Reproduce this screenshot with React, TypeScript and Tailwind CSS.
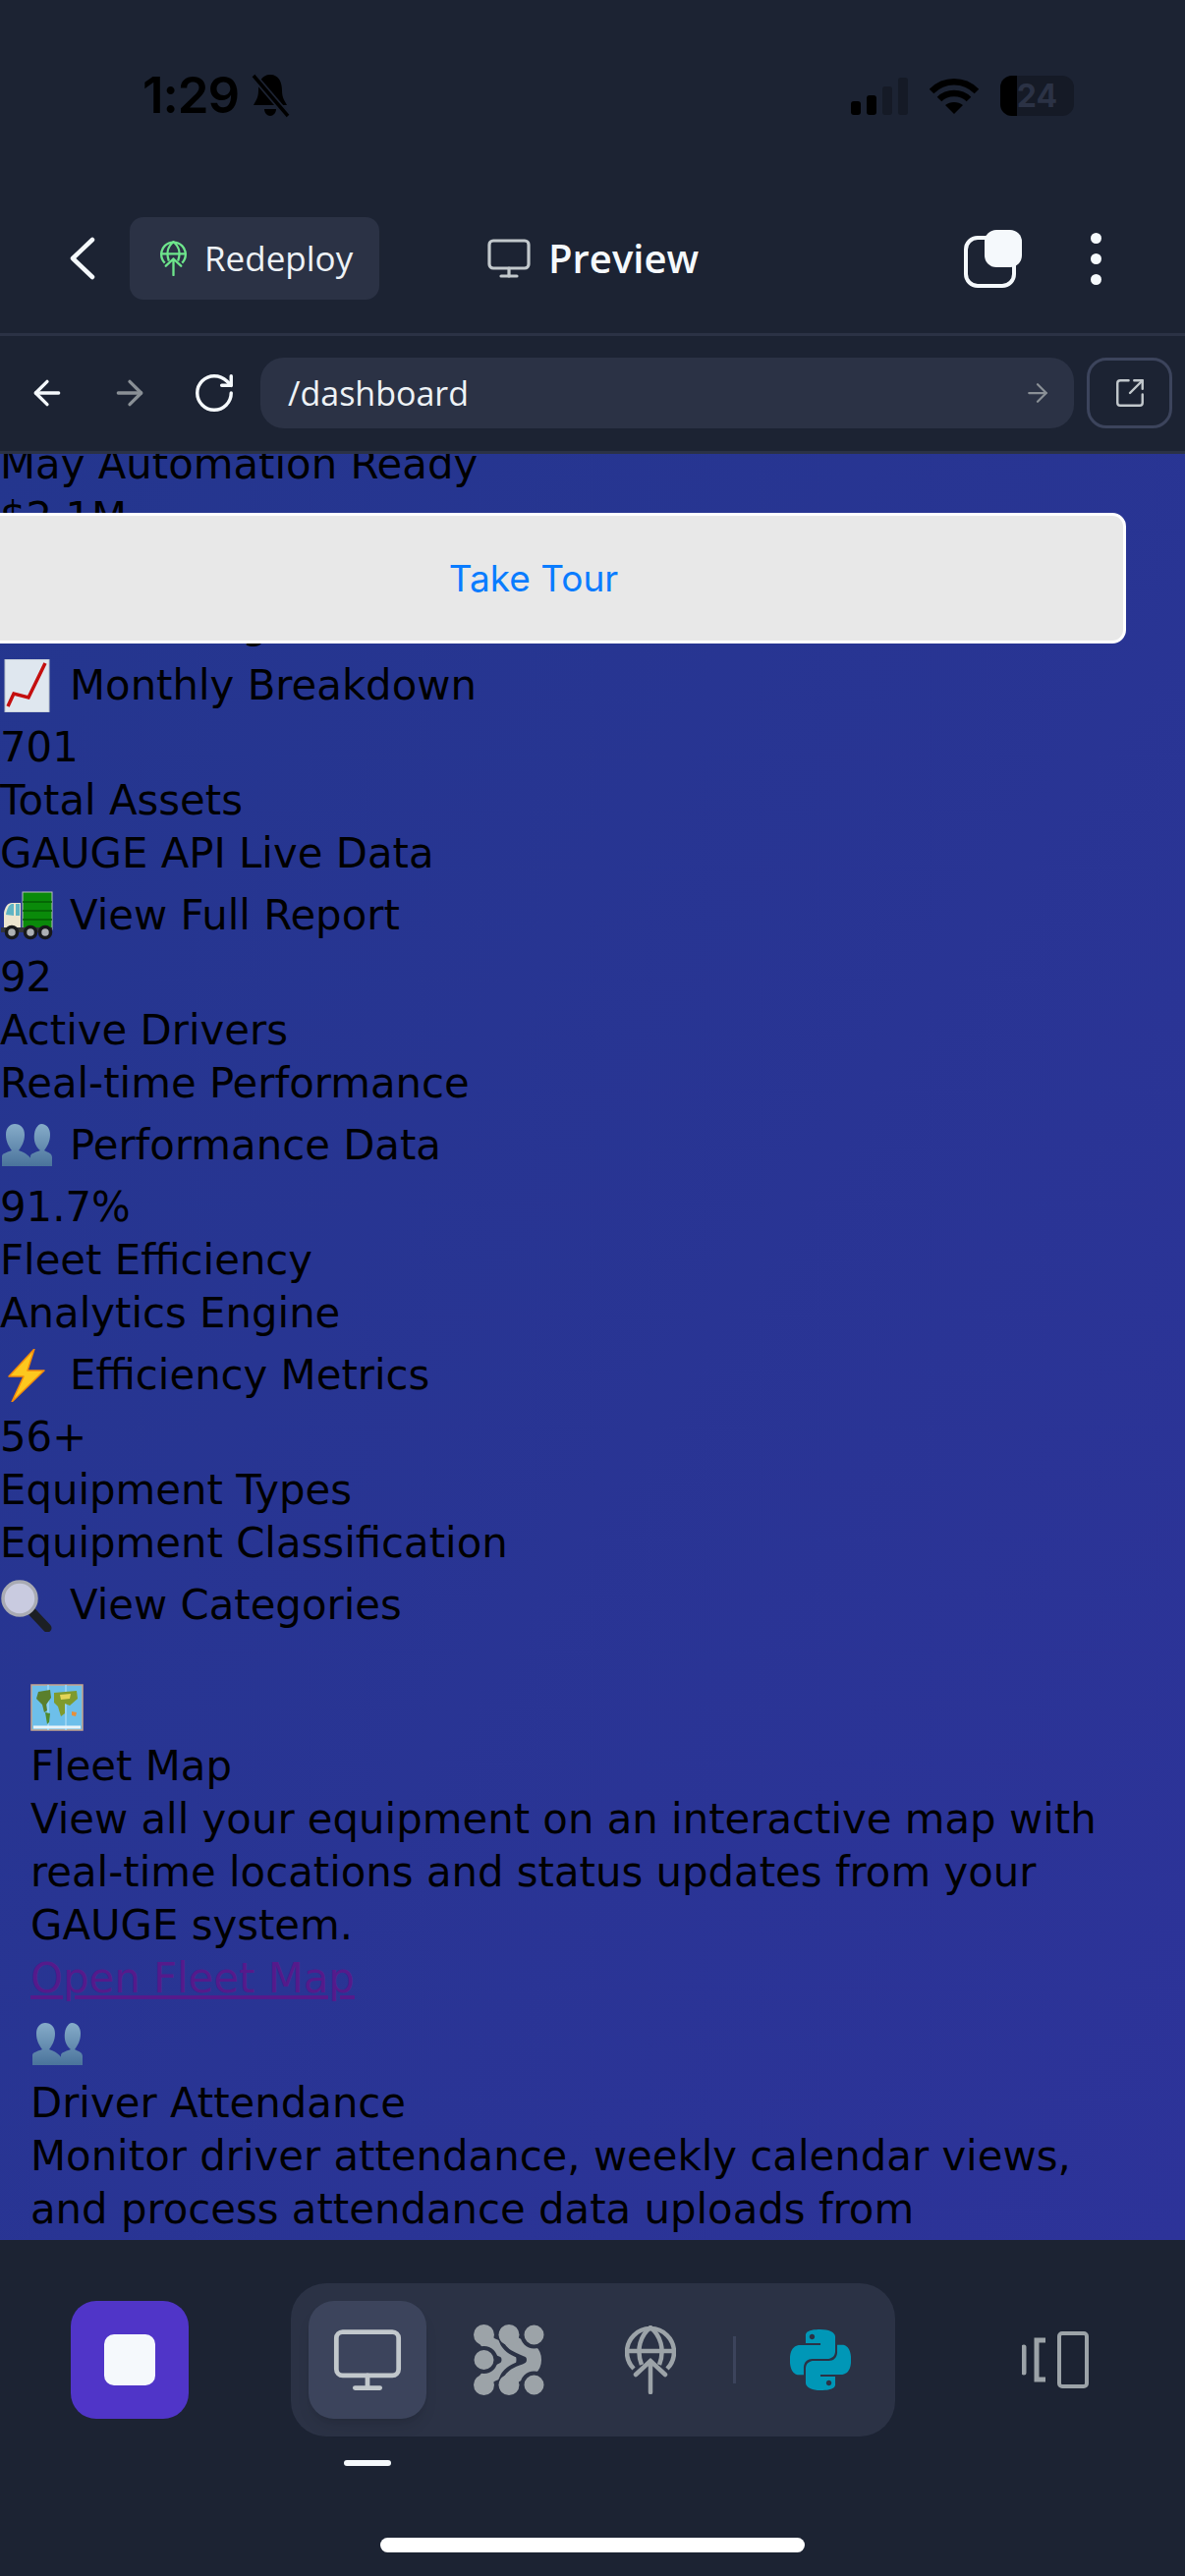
import { ArrowLeft, ArrowRight, Monitor, RotateCw, SquareArrowOutUpRight } from "lucide-react";
import type { ReactNode } from "react";
import { SiPython } from "react-icons/si";

const pageFont = "font-['DejaVu_Sans',sans-serif]";

function GlobeUp({ className, color }: { className: string; color: string }) {
  return (
    <svg className={className} viewBox="0 0 52 70" fill="none" stroke={color} strokeWidth="4.5" strokeLinecap="round">
      <path d="M9 44 A24 24 0 1 1 43 44" strokeLinecap="butt" />
      <path d="M2 26 H50" />
      <path d="M17 40 C11 24 16 10 26 2 C36 10 41 24 35 40" strokeLinecap="butt" />
      <path d="M26 36 V68 M11 50 L26 36 L41 50" />
    </svg>
  );
}

function DotsIcon() {
  const bg = "#2b3245";
  const fg = "#9ca3a8";
  return (
    <svg className="h-[72px] w-[72px]" viewBox="0 0 72 72">
      <g fill="none" strokeLinecap="round">
        <path d="M10.5 10.5 C13 27 36 20 36 36 C36 52 13 45 10.5 61.5" stroke={fg} strokeWidth="15" />
        <path d="M36 10.5 C38.5 27 61.5 20 61.5 36 C61.5 52 38.5 45 36 61.5" stroke={bg} strokeWidth="23" />
        <path d="M36 10.5 C38.5 27 61.5 20 61.5 36 C61.5 52 38.5 45 36 61.5" stroke={fg} strokeWidth="15" />
      </g>
      <g fill={fg}>
        <circle cx="10.5" cy="10.5" r="10.5" />
        <circle cx="36" cy="10.5" r="10.5" />
        <circle cx="10.5" cy="61.5" r="10.5" />
        <circle cx="36" cy="61.5" r="10.5" />
      </g>
      <g fill={fg} stroke={bg} strokeWidth="4">
        <circle cx="61.5" cy="10.5" r="12" />
        <circle cx="10.5" cy="36" r="12" />
        <circle cx="61.5" cy="61.5" r="12" />
      </g>
    </svg>
  );
}

function ChartEmoji() {
  return (
    <svg className="h-[54px] w-[54px]" viewBox="0 0 54 54">
      <rect x="5" y="0" width="45" height="54" fill="#dfe7ef" stroke="#b9c2cc" />
      <path d="M8 48 L14 35 L29 39 L46 4" fill="none" stroke="#c40f0f" strokeWidth="3.5" />
    </svg>
  );
}

function TruckEmoji() {
  return (
    <svg className="h-[54px] w-[54px]" viewBox="0 0 54 50">
      <rect x="23" y="1" width="30" height="38" fill="#0a8a0a" stroke="#b8bcc0" strokeWidth="1" />
      <path d="M23 11 H53 M23 20 H53 M23 29 H53" stroke="#045c04" strokeWidth="1.5" />
      <path d="M4 38 L4 22 C5 16 8 12 12 12 L21 12 L21 38 Z" fill="#ece5cf" />
      <path d="M6 24 C7 18 9 14 12 13 L14 13 L14 25 Z" fill="#5fb4c4" />
      <rect x="16" y="13" width="4" height="12" fill="#5fb4c4" />
      <rect x="1" y="37" width="52" height="5" fill="#33353a" />
      <g fill="#aeb1b5" stroke="#17181b" strokeWidth="3.5">
        <circle cx="12" cy="42" r="5.5" />
        <circle cx="31" cy="42" r="5.5" />
        <circle cx="46" cy="42" r="5.5" />
      </g>
    </svg>
  );
}

function PeopleEmoji() {
  return (
    <svg className="h-[54px] w-[54px]" viewBox="0 0 54 46">
      <defs>
        <linearGradient id="bust" x1="0" y1="0" x2="0" y2="1">
          <stop offset="0" stopColor="#86acc9" />
          <stop offset="1" stopColor="#4a739b" />
        </linearGradient>
      </defs>
      <path d="M31 44 V34 C31 31 36 30 41 28 C36 24 34 18 35 11 C36 4 40 1 42 1 C48 1 51 6 51 12 C51 19 48 24 45 28 C49 30 53 31 53 35 V44 Z" fill="url(#bust)" />
      <path d="M2 44 V34 C2 31 7 30 12 28 C9 24 6 19 6 12 C6 5 10 1 15 1 C21 1 25 5 25 12 C25 19 22 24 19 28 C24 30 30 31 36 44 Z" fill="url(#bust)" />
    </svg>
  );
}

function BoltEmoji() {
  return (
    <svg className="h-[54px] w-[54px]" viewBox="0 0 54 54">
      <path d="M35 0 L9 28 L24 28 L12 54 L45 22 L28 22 Z" fill="#fdc81e" stroke="#f28a0c" strokeWidth="1.5" strokeLinejoin="round" />
    </svg>
  );
}

function SearchEmoji() {
  return (
    <svg className="h-[54px] w-[54px]" viewBox="0 0 54 54">
      <path d="M32 33 L48 50" stroke="#1c1f24" strokeWidth="9" strokeLinecap="round" />
      <circle cx="20" cy="20" r="17" fill="#c9cbe0" stroke="#a9abb3" strokeWidth="3.5" />
    </svg>
  );
}

function MapEmoji() {
  return (
    <svg className="h-[54px] w-[54px]" viewBox="0 0 54 54">
      <rect x="1" y="4" width="52" height="46" fill="#6dbfea" stroke="#c8a68c" strokeWidth="1.5" />
      <path d="M18 4 V50 M36 4 V50" stroke="#94d2f2" strokeWidth="2" />
      <path d="M8 11 L20 9 L21 17 L16 24 L17 30 L14 32 L12 24 L6 18 Z" fill="#5a7f2c" />
      <path d="M15 32 L20 33 L19 42 L17 44 Z" fill="#4f8a2d" />
      <path d="M24 12 L47 10 L48 18 L40 25 L35 23 L35 33 L31 36 L28 26 L24 22 Z" fill="#7f9a2d" />
      <path d="M30 14 L41 13 L40 18 L31 19 Z" fill="#e3d457" />
      <path d="M42 31 L47 32 L46 36 L42 35 Z" fill="#e88f3a" />
      <path d="M3 47 H51" stroke="#e9f3f8" strokeWidth="3" />
    </svg>
  );
}

function Line({ children, className = "" }: { children: ReactNode; className?: string }) {
  return <div className={`h-[54px] leading-[54px] whitespace-nowrap ${className}`}>{children}</div>;
}

function ActionRow({ icon, label }: { icon: ReactNode; label: string }) {
  return (
    <div className="flex h-[72px] items-center gap-[17px] leading-[54px] whitespace-nowrap">
      {icon}
      <span>{label}</span>
    </div>
  );
}

const stats = [
  { value: "$2.1M", label: "Fleet Value", note: "Live Tracking", icon: <ChartEmoji />, action: "Monthly Breakdown" },
  { value: "701", label: "Total Assets", note: "GAUGE API Live Data", icon: <TruckEmoji />, action: "View Full Report" },
  { value: "92", label: "Active Drivers", note: "Real-time Performance", icon: <PeopleEmoji />, action: "Performance Data" },
  { value: "91.7%", label: "Fleet Efficiency", note: "Analytics Engine", icon: <BoltEmoji />, action: "Efficiency Metrics" },
  { value: "56+", label: "Equipment Types", note: "Equipment Classification", icon: <SearchEmoji />, action: "View Categories" },
];

export default function App() {
  return (
    <div className="flex h-[2622px] w-[1206px] flex-col overflow-hidden bg-[#1c2333]">
      {/* status bar, dark on dark */}
      <div className="flex h-[221px] items-start justify-between pt-[72px] pr-[113px] pl-[145px] text-black">
        <div className="flex items-center gap-[12px] font-['Inter',sans-serif] text-[51px] leading-[50px] font-semibold tracking-[-1px]">
          <span>1:29</span>
          <svg className="h-[46px] w-[40px]" viewBox="0 0 40 46" fill="#000">
            <path d="M20 2 C11 2 8 10 8 18 C8 26 5 29 3 33 H37 C35 29 32 26 32 18 C32 10 29 2 20 2 Z" />
            <path d="M14 37 H26 C26 41 23 44 20 44 C17 44 14 41 14 37 Z" />
            <path d="M3 3 L38 44" stroke="#1c2333" strokeWidth="7" />
            <path d="M3 3 L38 44" stroke="#000" strokeWidth="3.5" />
          </svg>
        </div>
        <div className="flex items-center gap-[22px] pt-[5px]">
          <div className="flex items-end gap-[6px]">
            <div className="h-[14px] w-[10px] rounded-[3px] bg-black" />
            <div className="h-[20px] w-[10px] rounded-[3px] bg-black" />
            <div className="h-[29px] w-[10px] rounded-[3px] bg-[#151a26]" />
            <div className="h-[38px] w-[10px] rounded-[3px] bg-[#151a26]" />
          </div>
          <svg className="h-[38px] w-[50px]" viewBox="0 0 50 38" fill="none" stroke="#000" strokeWidth="6.5">
            <path d="M2 14 C15 1 35 1 48 14" />
            <path d="M10 22 C18 14 32 14 40 22" />
            <path d="M25 37 L16 28 C21 24 29 24 34 28 Z" fill="#000" stroke="none" />
          </svg>
          <div className="relative flex h-[41px] w-[75px] items-center justify-center overflow-hidden rounded-[12px] bg-[#151a26] font-['Inter',sans-serif] text-[32px] font-bold text-[#2b3245]">
            <div className="absolute top-0 bottom-0 left-0 w-[17px] bg-black" />
            <span className="relative">24</span>
          </div>
        </div>
      </div>

      {/* app header */}
      <div className="flex h-[84px] items-center font-['Open_Sans',sans-serif]">
        <svg className="ml-[71px] h-[44px] w-[26px]" viewBox="0 0 26 44" fill="none" stroke="#f5f9fc" strokeWidth="4.5" strokeLinecap="round" strokeLinejoin="round">
          <path d="M23 3 L3 22 L23 41" />
        </svg>
        <div className="ml-[35px] flex h-[84px] w-[254px] items-center gap-[18px] rounded-[14px] bg-[#2b3245] pl-[31px] text-[35px] text-[#eef2f6]">
          <GlobeUp className="h-[36px] w-[27px]" color="#6ee58c" />
          <span>Redeploy</span>
        </div>
        <Monitor className="ml-[108px] h-[48px] w-[48px] text-[#c2c8cc]" strokeWidth={1.6} />
        <span className="ml-[16px] text-[40px] font-semibold text-[#f5f9fc]">Preview</span>
        <div className="relative ml-[270px] h-[59px] w-[59px]">
          <div className="absolute top-[6px] left-0 h-[53px] w-[53px] rounded-[14px] border-[4px] border-[#f5f9fc]" />
          <div className="absolute top-0 left-[21px] h-[38px] w-[38px] rounded-[12px] bg-[#f5f9fc]" />
        </div>
        <div className="ml-[70px] flex flex-col gap-[10px]">
          <div className="h-[11px] w-[11px] rounded-full bg-[#f5f9fc]" />
          <div className="h-[11px] w-[11px] rounded-full bg-[#f5f9fc]" />
          <div className="h-[11px] w-[11px] rounded-full bg-[#f5f9fc]" />
        </div>
      </div>

      {/* url bar */}
      <div className="mt-[34px] flex h-[123px] items-start border-t-[3px] border-b-[3px] border-[#2b3245] pt-[22px] font-['Open_Sans',sans-serif]">
        <ArrowLeft className="ml-[28px] h-[40px] w-[40px] translate-y-[16px] text-[#f5f9fc]" strokeWidth={2} />
        <ArrowRight className="ml-[44px] h-[40px] w-[40px] translate-y-[16px] text-[#8a9096]" strokeWidth={2} />
        <RotateCw className="ml-[43px] h-[46px] w-[46px] translate-y-[13px] text-[#f5f9fc]" strokeWidth={1.8} />
        <div className="ml-[24px] flex h-[72px] w-[828px] items-center justify-between rounded-[24px] bg-[#2b3245] pr-[22px] pl-[28px] text-[34px] text-[#eef2f6]">
          <span>/dashboard</span>
          <ArrowRight className="h-[30px] w-[30px] text-[#8a9096]" strokeWidth={1.8} />
        </div>
        <div className="ml-[13px] flex h-[72px] w-[87px] items-center justify-center rounded-[20px] border-[3px] border-[#3c445c]">
          <SquareArrowOutUpRight className="h-[34px] w-[34px] text-[#c2c8cc]" strokeWidth={1.7} />
        </div>
      </div>

      {/* page content */}
      <div className={`relative h-[1818px] shrink-0 overflow-hidden bg-gradient-to-br from-[#24368e] to-[#2d3399] text-[41.8px] text-black ${pageFont}`}>
        <div className="-mt-[16px]">
          <Line>May Automation Ready</Line>
          {stats.map((stat) => (
            <div key={stat.value}>
              <Line>{stat.value}</Line>
              <Line>{stat.label}</Line>
              <Line>{stat.note}</Line>
              <ActionRow icon={stat.icon} label={stat.action} />
            </div>
          ))}
          <div className="px-[31px] pt-[28px]">
            <div className="flex h-[73px] items-center pt-[6px]">
              <MapEmoji />
            </div>
            <Line>Fleet Map</Line>
            <Line>View all your equipment on an interactive map with</Line>
            <Line>real-time locations and status updates from your</Line>
            <Line>GAUGE system.</Line>
            <Line className="text-[#551a8b] underline">Open Fleet Map</Line>
            <div className="flex h-[73px] items-center pt-[6px]">
              <PeopleEmoji />
            </div>
            <Line>Driver Attendance</Line>
            <Line>Monitor driver attendance, weekly calendar views,</Line>
            <Line>and process attendance data uploads from</Line>
          </div>
        </div>
        <div className="absolute top-[60px] -left-[60px] flex h-[133px] w-[1206px] items-center justify-center rounded-[14px] border-[3px] border-white bg-[#e8e8e8] font-['Inter',sans-serif] text-[37px] text-[#0a7cff]">
          Take Tour
        </div>
      </div>

      {/* bottom toolbar */}
      <div className="flex items-center pt-[44px]">
        <div className="ml-[72px] flex h-[120px] w-[120px] items-center justify-center rounded-[26px] bg-[#5035c8]">
          <div className="h-[52px] w-[52px] rounded-[10px] bg-[#f5f9fc]" />
        </div>
        <div className="ml-[104px] flex h-[156px] w-[615px] items-center rounded-[36px] bg-[#2b3245] pl-[18px]">
          <div className="flex h-[120px] w-[120px] items-center justify-center rounded-[26px] bg-[#3c445c] shadow-lg">
            <Monitor className="h-[76px] w-[76px] text-[#c2c8cc]" strokeWidth={1.5} />
          </div>
          <div className="ml-[48px]">
            <DotsIcon />
          </div>
          <GlobeUp className="ml-[82px] h-[70px] w-[52px]" color="#9ca3a8" />
          <div className="ml-[58px] h-[48px] w-[3px] bg-[#3c445c]" />
          <SiPython className="ml-[55px] h-[62px] w-[62px] text-[#0097b7]" />
        </div>
        <svg className="ml-[129px] h-[58px] w-[68px]" viewBox="0 0 68 58" fill="none" stroke="#9ca3a8" strokeWidth="4">
          <rect x="38" y="2" width="28" height="54" rx="3" />
          <path d="M24 9 H15 V49 H24" strokeWidth="5" />
          <path d="M2 16 V42" strokeWidth="5" strokeLinecap="round" />
        </svg>
      </div>
      <div className="mt-[24px] ml-[350px] h-[6px] w-[48px] rounded-[3px] bg-[#f5f9fc]" />
      <div className="mt-[73px] ml-[387px] h-[15px] w-[432px] rounded-full bg-white" />
    </div>
  );
}
